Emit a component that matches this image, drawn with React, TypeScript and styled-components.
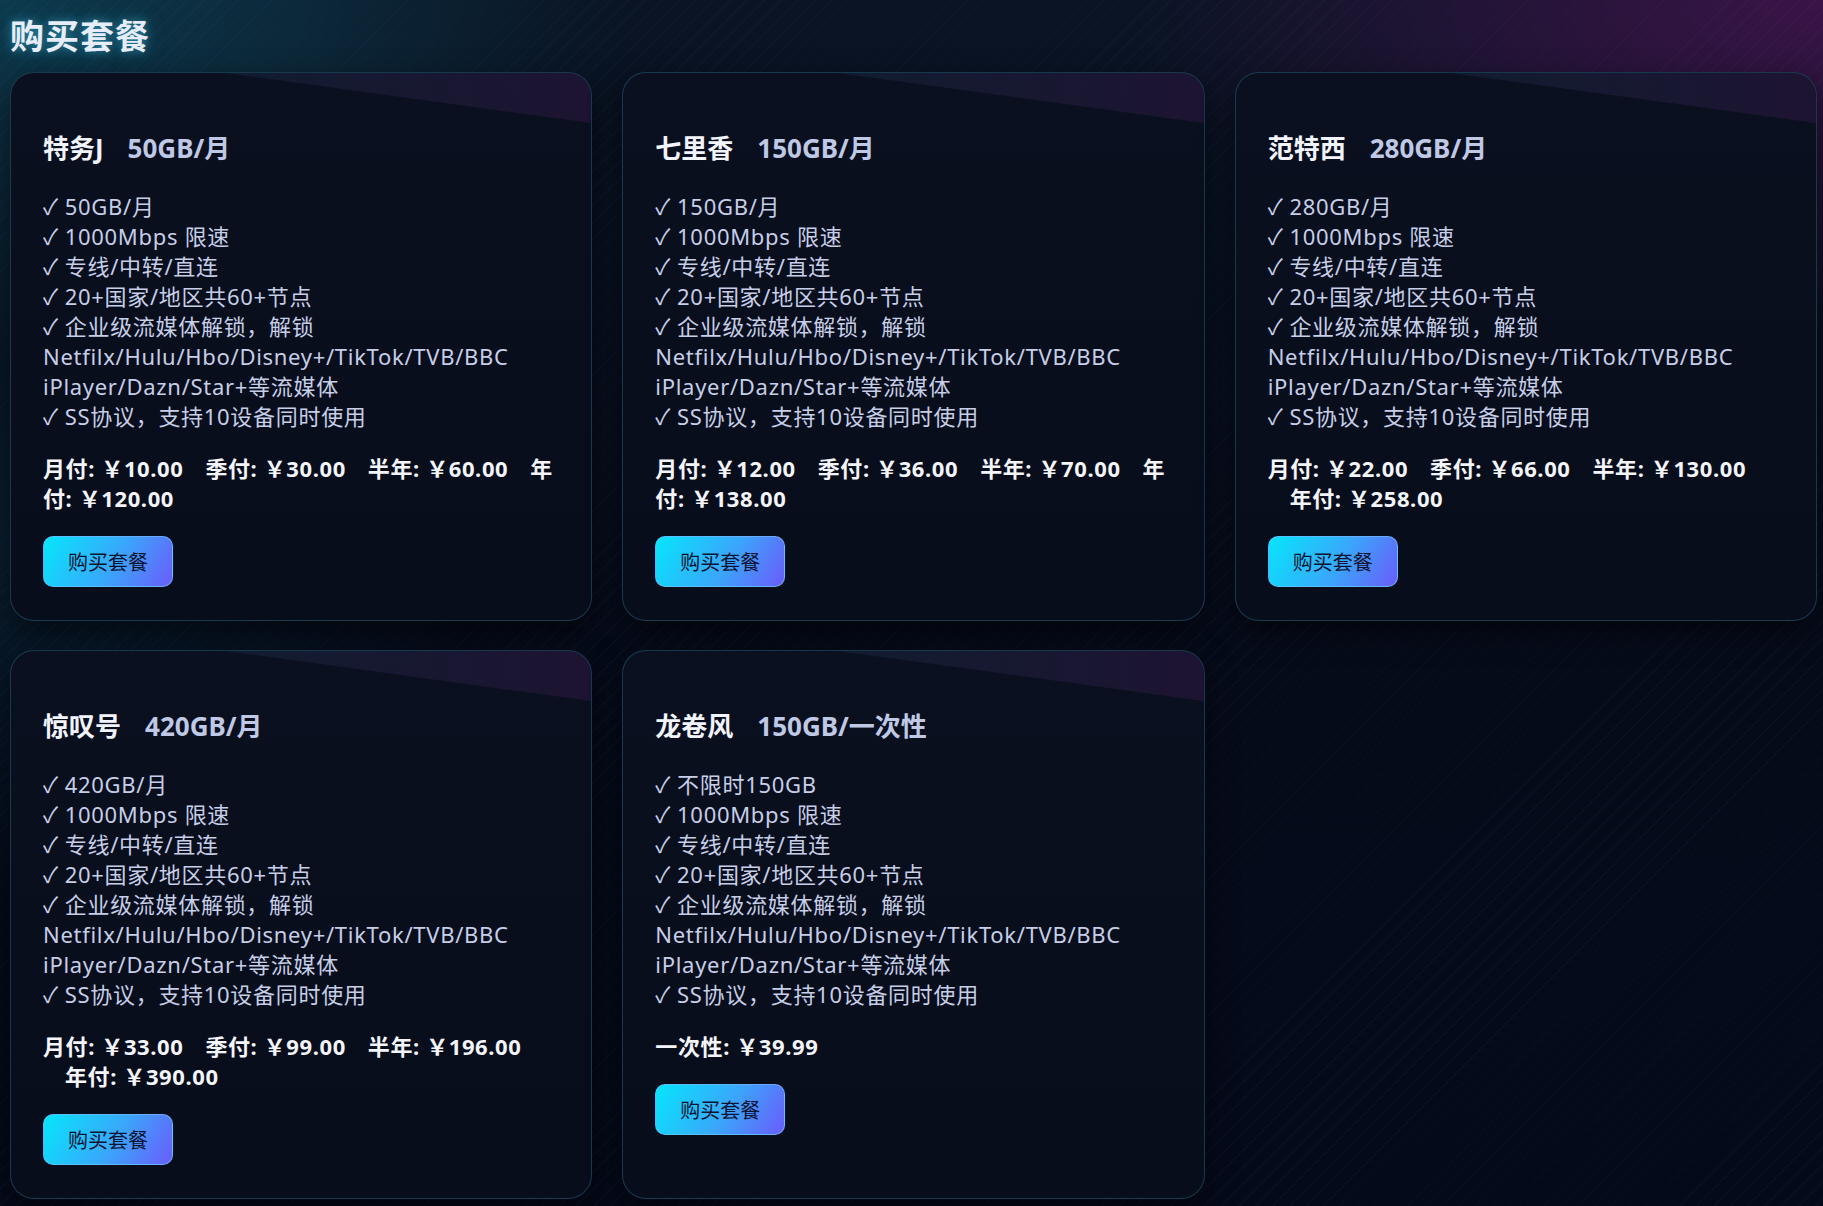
import React from "react";
import styled, { createGlobalStyle } from "styled-components";

const GlobalStyle = createGlobalStyle`
  * { box-sizing: border-box; }
  html, body { margin: 0; padding: 0; }
  body {
    min-height: 100vh;
    font-family: "Noto Sans", "Noto Sans CJK SC", sans-serif;
    color: #c9d1ea;
    background-color: #060b1a;
    background-image:
      repeating-linear-gradient(135deg, rgba(120,160,220,0.035) 0 1px, transparent 1px 12px),
      radial-gradient(ellipse 900px 520px at 0% 0%, rgba(16, 90, 110, 0.55), transparent 70%),
      radial-gradient(ellipse 1000px 480px at 100% 0%, rgba(90, 20, 95, 0.6), transparent 70%),
      radial-gradient(ellipse 700px 500px at 0% 45%, rgba(12, 60, 80, 0.35), transparent 70%),
      linear-gradient(180deg, #0a1424 0%, #060b1a 55%, #050a1a 100%);
  }
`;

const Page = styled.main`
  padding: 0 6px 8px 10px;
`;

const Heading = styled.h2`
  margin: 13px 0 15px;
  font-family: "Noto Sans CJK SC", sans-serif;
  font-size: 34px;
  line-height: 44px;
  font-weight: 700;
  letter-spacing: 1px;
  color: #e6edf8;
  text-shadow: 0 0 10px rgba(80, 220, 255, 0.45), 0 0 22px rgba(40, 180, 230, 0.25);
`;

const Grid = styled.div`
  display: grid;
  grid-template-columns: repeat(3, 1fr);
  gap: 29px 30px;
`;

const Card = styled.section`
  position: relative;
  overflow: hidden;
  display: flex;
  flex-direction: column;
  align-items: flex-start;
  padding: 32px 32px 33px;
  border: 1px solid rgba(40, 110, 140, 0.45);
  border-radius: 24px;
  background: linear-gradient(180deg, #0b1020 0%, #090e1c 60%, #080d1b 100%);
  box-shadow: 0 12px 30px rgba(0, 0, 0, 0.55);

  &::before {
    content: "";
    position: absolute;
    inset: 0 0 auto 0;
    height: 60px;
    clip-path: polygon(37% 0, 100% 0, 100% 50px);
    background: linear-gradient(90deg, rgba(25, 60, 85, 0.3) 30%, rgba(55, 25, 75, 0.42) 100%);
    pointer-events: none;
  }
`;

const Title = styled.h3`
  margin: 27px 0 27px;
  font-family: "Noto Sans", "Noto Sans CJK SC", sans-serif;
  font-size: 26px;
  line-height: 32px;
  font-weight: 700;
  color: #f1f4fc;
  white-space: nowrap;
`;

const Spec = styled.span`
  margin-left: 24px;
  color: #bfc9e6;
`;

const Features = styled.p`
  margin: 0;
  font-size: 22px;
  line-height: 30px;
  letter-spacing: 0.7px;
  color: #c6cee8;
`;

const Check = styled.span`
  font-family: "Noto Sans CJK SC", "DejaVu Sans", sans-serif;
  line-height: 0;
  margin-right: 6px;
`;

const Prices = styled.p`
  margin: 22px 0 0;
  font-size: 22px;
  line-height: 30px;
  font-weight: 700;
  letter-spacing: 0.6px;
  color: #f3f5fb;
`;

const Price = styled.span`
  & + & { margin-left: 22px; }
`;

const BuyButton = styled.button`
  margin-top: 23px;
  padding: 0 24px;
  height: 51px;
  border: 1px solid rgba(110, 190, 255, 0.75);
  border-radius: 10px;
  background: linear-gradient(120deg, #06e6fb 0%, #3aa6fb 55%, #6a5cfb 100%);
  font-family: "Noto Sans CJK SC", sans-serif;
  font-size: 20px;
  color: #0c1431;
  cursor: pointer;
`;

type Plan = {
  name: string;
  spec: string;
  features: string[];
  prices: string[];
};

const common = [
  "1000Mbps 限速",
  "专线/中转/直连",
  "20+国家/地区共60+节点",
  "企业级流媒体解锁，解锁Netfilx/Hulu/Hbo/Disney+/TikTok/TVB/BBC iPlayer/Dazn/Star+等流媒体",
  "SS协议，支持10设备同时使用",
];

const plans: Plan[] = [
  {
    name: "特务J",
    spec: "50GB/月",
    features: ["50GB/月", ...common],
    prices: ["月付: ￥10.00", "季付: ￥30.00", "半年: ￥60.00", "年付: ￥120.00"],
  },
  {
    name: "七里香",
    spec: "150GB/月",
    features: ["150GB/月", ...common],
    prices: ["月付: ￥12.00", "季付: ￥36.00", "半年: ￥70.00", "年付: ￥138.00"],
  },
  {
    name: "范特西",
    spec: "280GB/月",
    features: ["280GB/月", ...common],
    prices: ["月付: ￥22.00", "季付: ￥66.00", "半年: ￥130.00", "年付: ￥258.00"],
  },
  {
    name: "惊叹号",
    spec: "420GB/月",
    features: ["420GB/月", ...common],
    prices: ["月付: ￥33.00", "季付: ￥99.00", "半年: ￥196.00", "年付: ￥390.00"],
  },
  {
    name: "龙卷风",
    spec: "150GB/一次性",
    features: ["不限时150GB", ...common],
    prices: ["一次性: ￥39.99"],
  },
];

export default function App() {
  return (
    <>
      <GlobalStyle />
      <Page>
        <Heading>购买套餐</Heading>
        <Grid>
          {plans.map((p) => (
            <Card key={p.name}>
              <Title>
                {p.name}
                <Spec>{p.spec}</Spec>
              </Title>
              <Features>
                {p.features.map((f, i) => (
                  <React.Fragment key={i}>
                    {i > 0 && <br />}
                    <Check>✓</Check>
                    {f}
                  </React.Fragment>
                ))}
              </Features>
              <Prices>
                {p.prices.map((pr) => (
                  <Price key={pr}>{pr}</Price>
                ))}
              </Prices>
              <BuyButton type="button">购买套餐</BuyButton>
            </Card>
          ))}
        </Grid>
      </Page>
    </>
  );
}
